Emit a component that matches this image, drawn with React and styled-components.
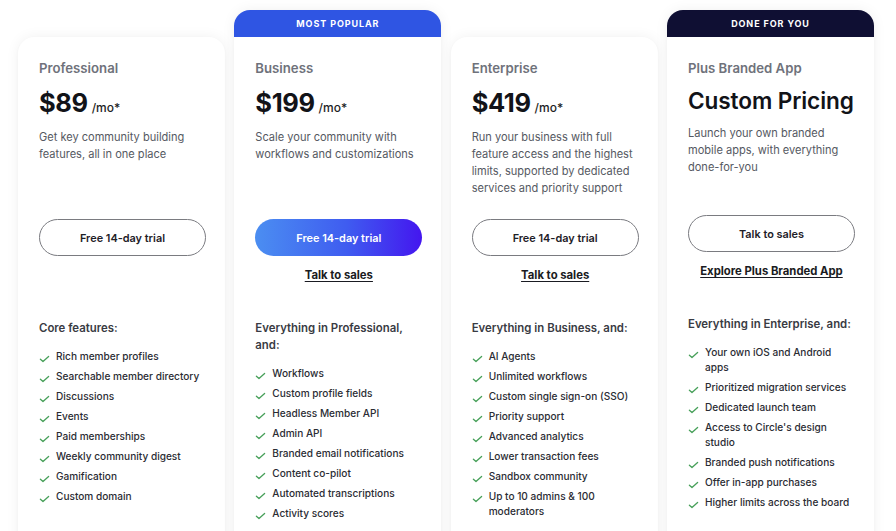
import React from 'react';
import styled, { createGlobalStyle, css } from 'styled-components';

const GlobalStyle = createGlobalStyle`
    html, body {
        margin: 0;
        padding: 0;
        background: #ffffff;
        overflow: hidden;
    }
    body {
        font-family: Inter, "Liberation Sans", sans-serif;
        -webkit-font-smoothing: antialiased;
    }
`;

const plans = [
    {
        name: 'Professional',
        price: '$89',
        desc: 'Get key community building features, all in one place',
        cta: 'Free 14-day trial',
        heading: 'Core features:',
        features: [
            'Rich member profiles',
            'Searchable member directory',
            'Discussions',
            'Events',
            'Paid memberships',
            'Weekly community digest',
            'Gamification',
            'Custom domain',
        ],
    },
    {
        name: 'Business',
        price: '$199',
        badge: 'MOST POPULAR',
        badgeColor: '#2f55e3',
        primary: true,
        desc: 'Scale your community with workflows and customizations',
        cta: 'Free 14-day trial',
        link: 'Talk to sales',
        heading: 'Everything in Professional, and:',
        features: [
            'Workflows',
            'Custom profile fields',
            'Headless Member API',
            'Admin API',
            'Branded email notifications',
            'Content co-pilot',
            'Automated transcriptions',
            'Activity scores',
        ],
    },
    {
        name: 'Enterprise',
        price: '$419',
        desc: 'Run your business with full feature access and the highest limits, supported by dedicated services and priority support',
        cta: 'Free 14-day trial',
        link: 'Talk to sales',
        heading: 'Everything in Business, and:',
        features: [
            'AI Agents',
            'Unlimited workflows',
            'Custom single sign-on (SSO)',
            'Priority support',
            'Advanced analytics',
            'Lower transaction fees',
            'Sandbox community',
            'Up to 10 admins & 100 moderators',
        ],
    },
    {
        name: 'Plus Branded App',
        custom: 'Custom Pricing',
        badge: 'DONE FOR YOU',
        badgeColor: '#0f0f33',
        desc: 'Launch your own branded mobile apps, with everything done-for-you',
        cta: 'Talk to sales',
        link: 'Explore Plus Branded App',
        heading: 'Everything in Enterprise, and:',
        features: [
            'Your own iOS and Android apps',
            'Prioritized migration services',
            'Dedicated launch team',
            "Access to Circle's design studio",
            'Branded push notifications',
            'Offer in-app purchases',
            'Higher limits across the board',
        ],
    },
];

function Check() {
    return (
        <CheckIcon width="11" height="9" viewBox="0 0 11 9" fill="none">
            <path
                d="M1.4 5.2 L4 7.6 L9.6 2.4"
                stroke="#48a05a"
                strokeWidth="1.3"
                strokeLinecap="round"
                strokeLinejoin="round"
            />
        </CheckIcon>
    );
}

function PlanCard({ plan }) {
    return (
        <Card $badged={!!plan.badge}>
            {plan.badge && <Badge $color={plan.badgeColor}>{plan.badge}</Badge>}
            <CardBody>
                <PlanName>{plan.name}</PlanName>
                {plan.custom ? (
                    <CustomPrice>{plan.custom}</CustomPrice>
                ) : (
                    <Price>
                        {plan.price}
                        <Per>/mo*</Per>
                    </Price>
                )}
                <Desc>{plan.desc}</Desc>
                <CtaBlock>
                    <Button $primary={plan.primary}>{plan.cta}</Button>
                    {plan.link && <TextLink href="#">{plan.link}</TextLink>}
                </CtaBlock>
                <FeatureHeading>{plan.heading}</FeatureHeading>
                <FeatureList>
                    {plan.features.map((f) => (
                        <Feature key={f}>
                            <Check />
                            <span>{f}</span>
                        </Feature>
                    ))}
                </FeatureList>
            </CardBody>
        </Card>
    );
}

export default function App() {
    return (
        <>
            <GlobalStyle />
            <Page>
                <Grid>
                    {plans.map((p) => (
                        <PlanCard key={p.name} plan={p} />
                    ))}
                </Grid>
            </Page>
        </>
    );
}

const Page = styled.main`
    padding: 10px 0 0 18px;
    height: 531px;
    box-sizing: border-box;
`;

const Grid = styled.div`
    display: grid;
    grid-template-columns: repeat(4, 207px);
    column-gap: 9.33px;
    align-items: start;
`;

const Card = styled.section`
    background: #ffffff;
    border-radius: 16px;
    box-shadow: 0 0 14px rgba(0, 0, 0, 0.06), 0 1px 3px rgba(0, 0, 0, 0.03);
    min-height: 560px;
    overflow: hidden;
    ${(p) =>
        !p.$badged &&
        css`
            margin-top: 27px;
        `}
`;

const Badge = styled.div`
    height: 27px;
    display: flex;
    align-items: center;
    justify-content: center;
    background: ${(p) => p.$color};
    color: #ffffff;
    font-size: 9px;
    font-weight: 700;
    letter-spacing: 0.9px;
`;

const CardBody = styled.div`
    padding: 22px 19px 40px 21px;
`;

const PlanName = styled.h3`
    margin: 0;
    font-size: 13.2px;
    line-height: 18px;
    font-weight: 600;
    color: #6f727b;
`;

const Price = styled.div`
    margin-top: 10px;
    font-size: 25.5px;
    line-height: 32px;
    font-weight: 700;
    color: #121318;
    letter-spacing: -0.4px;
    display: flex;
    align-items: baseline;
`;

const Per = styled.span`
    margin-left: 4px;
    font-size: 12px;
    font-weight: 500;
    letter-spacing: 0;
    color: #1d1e24;
`;

const CustomPrice = styled.div`
    margin: 10px 0 10px;
    font-size: 22.6px;
    line-height: 28px;
    font-weight: 600;
    color: #121318;
    letter-spacing: -0.1px;
`;

const Desc = styled.p`
    margin: 5px 0 0;
    font-size: 11.05px;
    line-height: 17px;
    color: #555962;
    min-height: 68px;
`;

const CtaBlock = styled.div`
    margin-top: 22px;
    height: 84px;
    display: flex;
    flex-direction: column;
    align-items: center;
`;

const Button = styled.button`
    width: 100%;
    height: 37px;
    border-radius: 999px;
    font-family: inherit;
    font-size: 10.9px;
    font-weight: 600;
    cursor: pointer;
    ${(p) =>
        p.$primary
            ? css`
                  border: none;
                  color: #ffffff;
                  background: linear-gradient(90deg, #4b8ef1 0%, #3f5cf0 55%, #4416ef 100%);
              `
            : css`
                  border: 1px solid #7a7b80;
                  color: #1e2027;
                  background: #ffffff;
              `}
`;

const TextLink = styled.a`
    margin-top: 10px;
    font-size: 11.3px;
    line-height: 18px;
    font-weight: 700;
    color: #1a1b22;
    text-decoration: underline;
    text-underline-offset: 2px;
`;

const FeatureHeading = styled.h4`
    margin: 17px 0 0;
    font-size: 11.4px;
    line-height: 17px;
    font-weight: 600;
    color: #393b43;
`;

const FeatureList = styled.ul`
    list-style: none;
    margin: 12px 0 0;
    padding: 0;
    display: flex;
    flex-direction: column;
    gap: 5px;
`;

const Feature = styled.li`
    display: flex;
    align-items: flex-start;
    gap: 6px;
    font-size: 10.1px;
    line-height: 15px;
    font-weight: 500;
    color: #2a2c33;
`;

const CheckIcon = styled.svg`
    flex: none;
    margin-top: 5px;
`;
